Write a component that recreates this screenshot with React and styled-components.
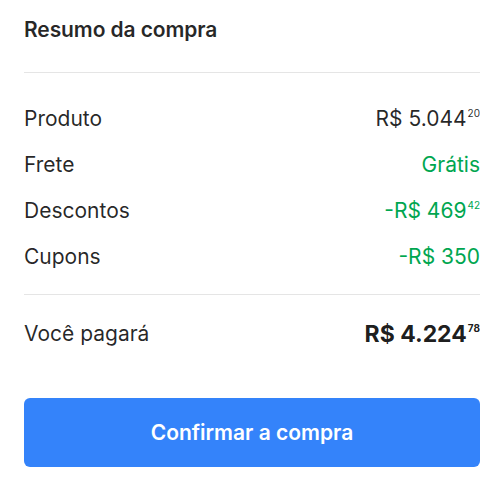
import styled, { createGlobalStyle } from "styled-components";

const GlobalStyle = createGlobalStyle`
  body {
    margin: 0;
    background: #fff;
    font-family: Inter, "Noto Sans", Arial, sans-serif;
    color: rgba(0, 0, 0, 0.85);
  }
`;

const Card = styled.div`
  width: 500px;
  padding: 18px 20px 0 24px;
  box-sizing: border-box;
`;

const Title = styled.h2`
  margin: 0;
  font-size: 21px;
  font-weight: 600;
  line-height: 24px;
  letter-spacing: -0.1px;
`;

const Divider = styled.hr`
  border: none;
  border-top: 1px solid #e5e5e5;
  margin: ${(p) => p.$top || 0}px 0 0;
`;

const List = styled.div`
  display: flex;
  flex-direction: column;
  gap: 22px;
  padding: 34px 0 25px;
`;

const Row = styled.div`
  display: flex;
  justify-content: space-between;
  align-items: center;
  height: 24px;
  font-size: 21px;
  line-height: 24px;
`;

const Value = styled.span`
  color: ${(p) => (p.$green ? "#00a650" : "rgba(0, 0, 0, 0.85)")};
  font-weight: ${(p) => (p.$bold ? 700 : 400)};
  font-size: ${(p) => (p.$bold ? 23 : 21)}px;
  color: ${(p) => (p.$bold ? "rgba(0, 0, 0, 0.9)" : undefined)};
`;

const Cents = styled.sup`
  font-size: 10px;
  vertical-align: top;
  line-height: 1;
  margin-left: 1px;
  position: relative;
  top: 1px;
`;

const TotalRow = styled(Row)`
  margin-top: 27px;
`;

const Button = styled.button`
  display: block;
  width: 100%;
  height: 69px;
  margin-top: 52px;
  border: none;
  border-radius: 6px;
  background: #3483fa;
  color: #fff;
  font-family: inherit;
  font-size: 21px;
  font-weight: 600;
  cursor: pointer;
`;

const Price = ({ value, cents, green, bold }) => (
  <Value $green={green} $bold={bold}>
    {value}
    {cents && <Cents>{cents}</Cents>}
  </Value>
);

export default function App() {
  return (
    <>
      <GlobalStyle />
      <Card>
        <Title>Resumo da compra</Title>
        <Divider $top={30} />
        <List>
          <Row>
            <span>Produto</span>
            <Price value="R$ 5.044" cents="20" />
          </Row>
          <Row>
            <span>Frete</span>
            <Price value="Grátis" green />
          </Row>
          <Row>
            <span>Descontos</span>
            <Price value="-R$ 469" cents="42" green />
          </Row>
          <Row>
            <span>Cupons</span>
            <Price value="-R$ 350" green />
          </Row>
        </List>
        <Divider />
        <TotalRow>
          <span>Você pagará</span>
          <Price value="R$ 4.224" cents="78" bold />
        </TotalRow>
        <Button>Confirmar a compra</Button>
      </Card>
    </>
  );
}
